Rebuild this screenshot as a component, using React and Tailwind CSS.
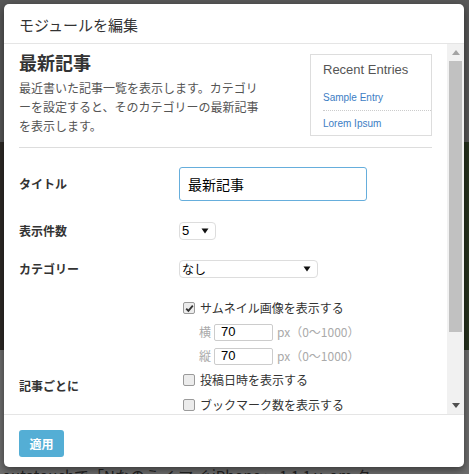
import React from "react";

const jp = { fontFamily: '"Noto Sans CJK JP", "Noto Sans", sans-serif' };
const lat = { fontFamily: '"Liberation Sans", Arial, sans-serif' };

function Check({ checked }) {
  return (
    <span className="w-[12px] h-[12px] border border-[#9a9a9a] rounded-[2px] bg-[#ececec] flex items-center justify-center shrink-0">
      {checked && (
        <svg width="9" height="9" viewBox="0 0 9 9">
          <path d="M1.2 4.6 L3.4 6.9 L7.8 1.6" stroke="#333" strokeWidth="1.8" fill="none" />
        </svg>
      )}
    </span>
  );
}

function Arrow() {
  return (
    <svg width="8" height="6" viewBox="0 0 8 6">
      <path d="M0.5 0.5 L7.5 0.5 L4 5.5 Z" fill="#111" />
    </svg>
  );
}

function CheckRow({ checked, label }) {
  return (
    <div className="h-[24px] flex items-center pl-[4px] gap-[5px] text-[12px] text-[#333]">
      <Check checked={checked} />
      <span>{label}</span>
    </div>
  );
}

function SizeRow({ label }) {
  return (
    <div className="h-[24px] flex items-center pl-[20px] text-[12px] text-[#aaa]">
      <span className="w-[15px]">{label}</span>
      <div className="w-[59px] h-[17px] border border-[#ccc] rounded-[2px] flex items-center pl-[6px] text-[13px] text-black" style={lat}>
        70
      </div>
      <span className="ml-[4px]">px（0〜1000）</span>
    </div>
  );
}

export default function App() {
  return (
    <div className="relative w-[469px] h-[474px] overflow-hidden flex flex-col" style={jp}>
      <div className="h-[142px] bg-[#585858]" />
      <div className="h-[208px] bg-gradient-to-r from-[#2e2a26] via-[#2a2a24] to-[#27331f]" />
      <div className="flex-1 bg-[#6e6e6e] flex flex-col justify-end">
        <div className="text-[15px] text-[#222] leading-[18px] -mb-[11px] pl-[2px] whitespace-nowrap">
          outatouchで「Nなのうイ マ ぐiPhone」 1 1 1 v. om タ
        </div>
      </div>

      <div className="absolute left-[4px] top-[4px] w-[460px] h-[463px] bg-white rounded-[5px] shadow-[0_3px_9px_rgba(0,0,0,0.5)] flex flex-col overflow-hidden">
        <div className="h-[40px] shrink-0 border-b border-[#e5e5e5] pl-[15px] flex items-center pt-[3px] text-[15px] text-[#333]">
          モジュールを編集
        </div>

        <div className="h-[370px] shrink-0 flex">
          <div className="w-[443px] overflow-hidden px-[15px]">
            <div className="flex items-start">
              <div className="w-[246px]">
                <div className="mt-[6px] text-[18px] leading-[24px] font-bold text-[#333]">最新記事</div>
                <div className="mt-[4px] text-[12px] leading-[19px] text-[#555]">
                  最近書いた記事一覧を表示します。カテゴリーを設定すると、そのカテゴリーの最新記事を表示します。
                </div>
              </div>
              <div className="ml-auto mt-[10px] w-[122px] h-[82px] border border-[#ddd] flex flex-col" style={lat}>
                <div className="h-[30px] flex items-center pl-[12px] text-[13px] text-[#555]">Recent Entries</div>
                <div className="ml-[12px] h-[26px] flex items-center border-b border-dotted border-[#ccc] text-[10px] text-[#3c7dc4]">
                  Sample Entry
                </div>
                <div className="ml-[12px] h-[24px] flex items-center text-[10px] text-[#3c7dc4]">Lorem Ipsum</div>
              </div>
            </div>

            <div className="mt-[11px] border-t border-[#ddd]" />

            <div className="flex h-[72px] items-center">
              <div className="w-[160px] text-[12px] font-bold text-[#333]">タイトル</div>
              <div className="w-[188px] h-[34px] border border-[#66aedc] rounded-[3px] flex items-center pl-[8px] text-[14px] text-black">
                最新記事
              </div>
            </div>

            <div className="flex h-[22px] items-center">
              <div className="w-[160px] text-[12px] font-bold text-[#333]">表示件数</div>
              <div className="w-[37px] h-[18px] border border-[#ddd] rounded-[4px] flex items-center justify-between pl-[2px] pr-[6px] text-[13px] text-black" style={lat}>
                <span>5</span>
                <Arrow />
              </div>
            </div>

            <div className="flex h-[54px] items-center">
              <div className="w-[160px] text-[12px] font-bold text-[#333]">カテゴリー</div>
              <div className="w-[139px] h-[18px] border border-[#ddd] rounded-[4px] flex items-center justify-between pl-[2px] pr-[6px] text-[12px] text-black">
                <span>なし</span>
                <Arrow />
              </div>
            </div>

            <div className="flex items-start">
              <div className="w-[160px] pt-[81px] text-[12px] leading-[18px] font-bold text-[#333]">記事ごとに</div>
              <div className="flex flex-col">
                <CheckRow checked label="サムネイル画像を表示する" />
                <SizeRow label="横" />
                <SizeRow label="縦" />
                <CheckRow label="投稿日時を表示する" />
                <div className="mt-[1px]">
                  <CheckRow label="ブックマーク数を表示する" />
                </div>
              </div>
            </div>
          </div>

          <div className="w-[17px] bg-[#f1f1f1] flex flex-col items-center">
            <div className="h-[17px] flex items-center justify-center">
              <svg width="8" height="5" viewBox="0 0 8 5"><path d="M0 5 L8 5 L4 0 Z" fill="#a3a3a3" /></svg>
            </div>
            <div className="w-[13px] h-[271px] bg-[#c1c1c1]" />
            <div className="flex-1" />
            <div className="h-[17px] flex items-center justify-center">
              <svg width="8" height="5" viewBox="0 0 8 5"><path d="M0 0 L8 0 L4 5 Z" fill="#505050" /></svg>
            </div>
          </div>
        </div>

        <div className="border-t border-[#e5e5e5] pt-[15px] pl-[15px]">
          <div className="w-[45px] h-[27px] bg-[#54aed5] rounded-[3px] flex items-center justify-center text-[12px] font-bold text-white">
            適用
          </div>
        </div>
      </div>
    </div>
  );
}
